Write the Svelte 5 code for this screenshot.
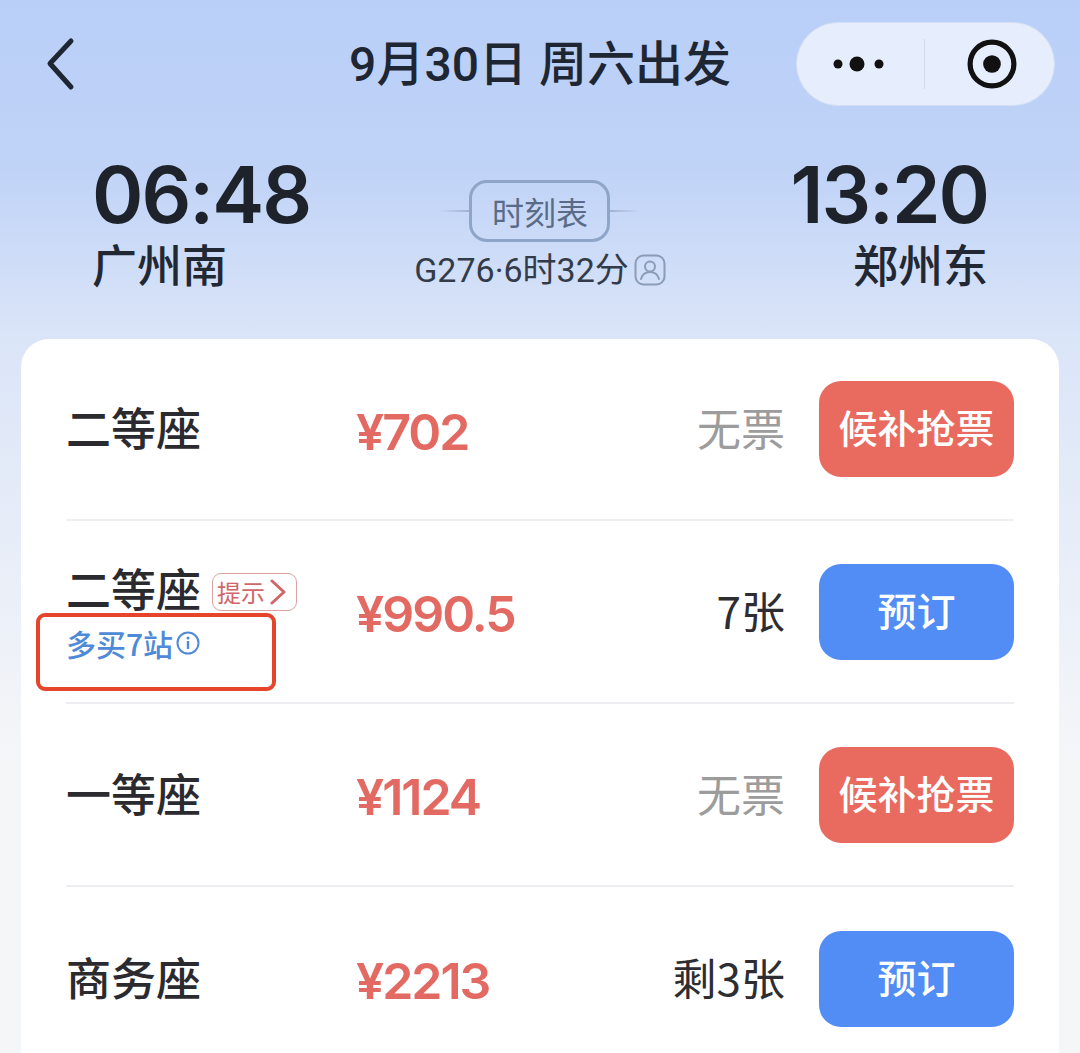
<script>
	const seats = [
		{ name: '二等座', price: '¥702', stock: '无票', soldOut: true },
		{ name: '二等座', price: '¥990.5', stock: '7张', soldOut: false, tip: true },
		{ name: '一等座', price: '¥1124', stock: '无票', soldOut: true },
		{ name: '商务座', price: '¥2213', stock: '剩3张', soldOut: false }
	];
</script>

<div class="page">
	<header class="nav">
		<svg class="back" width="32" height="56" viewBox="0 0 32 56">
			<path d="M26 4 L5 26.500 L26 50" fill="none" stroke="#1f2633" stroke-width="5" stroke-linecap="round" stroke-linejoin="round" />
		</svg>
		<div class="title">9月30日 周六出发</div>
		<div class="capsule">
			<svg width="52" height="16" viewBox="0 0 52 16">
				<circle cx="5" cy="8" r="4.500" fill="#111" />
				<circle cx="24" cy="8" r="7.500" fill="#111" />
				<circle cx="46" cy="8" r="4.500" fill="#111" />
			</svg>
			<span class="sep"></span>
			<svg width="50" height="50" viewBox="0 0 48 48">
				<circle cx="24" cy="24" r="21" fill="none" stroke="#111" stroke-width="5" />
				<circle cx="24" cy="24" r="8.500" fill="#111" />
			</svg>
		</div>
	</header>

	<section class="trip">
		<div class="end">
			<div class="time">06:48</div>
			<div class="station">广州南</div>
		</div>
		<div class="mid">
			<div class="sched"><span class="line left"></span><span class="pill">时刻表</span><span class="line right"></span></div>
			<div class="info">
				<span>G276·6时32分</span>
				<svg width="32" height="32" viewBox="0 0 32 32">
					<rect x="1.500" y="1.500" width="29" height="29" rx="8" fill="none" stroke="#8a9cb8" stroke-width="2" />
					<circle cx="16" cy="12.500" r="5" fill="none" stroke="#8a9cb8" stroke-width="2" />
					<path d="M7 25 C8.500 19.500 12 18 16 18 C20 18 23.500 19.500 25 25" fill="none" stroke="#8a9cb8" stroke-width="2" stroke-linecap="round" />
				</svg>
			</div>
		</div>
		<div class="end right">
			<div class="time">13:20</div>
			<div class="station">郑州东</div>
		</div>
	</section>

	<main class="card">
		{#each seats as seat}
			<div class="row">
				<div class="seat">
					<div class="seat-name">
						<span>{seat.name}</span>
						{#if seat.tip}
							<span class="tag">提示
								<svg width="16" height="26" viewBox="0 0 16 26">
									<path d="M2 2 L14 13 L2 24" fill="none" stroke="#d0666a" stroke-width="3" stroke-linecap="round" stroke-linejoin="round" />
								</svg>
							</span>
						{/if}
					</div>
					{#if seat.tip}
						<div class="extra">
							<span>多买7站</span>
							<svg width="24" height="24" viewBox="0 0 24 24">
								<circle cx="12" cy="12" r="10.500" fill="none" stroke="#4f8ad8" stroke-width="2" />
								<rect x="10.800" y="10" width="2.400" height="8" fill="#4f8ad8" />
								<circle cx="12" cy="7" r="1.500" fill="#4f8ad8" />
							</svg>
						</div>
						<div class="mark"></div>
					{/if}
				</div>
				<div class="price">{seat.price}</div>
				<div class="stock" class:none={seat.soldOut}>{seat.stock}</div>
				<button class="btn" class:wait={seat.soldOut}>{seat.soldOut ? '候补抢票' : '预订'}</button>
			</div>
		{/each}
	</main>
</div>

<style>
	:global(body) {
		margin: 0;
		background: #f5f6f8;
	}
	.page {
		height: 1053px;
		overflow: hidden;
		font-family: "Noto Sans CJK SC", "Noto Sans", sans-serif;
		color: #222833;
		background: linear-gradient(180deg, #b9cff8 0, #c0d3f7 170px, #dbe5f8 340px, #f5f6f8 760px);
	}
	.nav {
		display: grid;
		grid-template-columns: 1fr auto 1fr;
		align-items: center;
		height: 84px;
		padding: 21px 25px 0 45px;
	}
	.back {
		margin-top: 2px;
	}
	.title {
		font-family: Roboto, "Noto Sans CJK SC", sans-serif;
		font-size: 48px;
		font-weight: 500;
		line-height: 84px;
		margin-top: 2px;
		margin-left: -20px;
		color: #1f2633;
		white-space: nowrap;
	}
	.capsule {
		justify-self: end;
		display: flex;
		align-items: center;
		box-sizing: border-box;
		width: 259px;
		height: 84px;
		padding: 0 36px;
		border-radius: 42px;
		background: #e6edfc;
		border: 1px solid #d4dff5;
	}
	.sep {
		width: 1px;
		height: 50px;
		margin: 0 42px 0 39px;
		background: #d3dcef;
	}
	.trip {
		display: grid;
		grid-template-columns: 1fr auto 1fr;
		padding: 48px 92px 0;
	}
	.end {
		display: flex;
		flex-direction: column;
	}
	.end.right {
		align-items: flex-end;
	}
	.time {
		font-family: Inter, sans-serif;
		font-size: 78px;
		font-weight: 600;
		line-height: 84px;
		color: #1e222b;
		letter-spacing: -2px;
	}
	.station {
		font-size: 45px;
		font-weight: 500;
		line-height: 50px;
		margin-top: 2px;
	}
	.mid {
		display: flex;
		flex-direction: column;
		align-items: center;
		margin-top: 27px;
	}
	.sched {
		display: flex;
		align-items: center;
	}
	.pill {
		box-sizing: border-box;
		width: 141px;
		height: 62px;
		line-height: 56px;
		text-align: center;
		font-size: 32px;
		color: #5a6b88;
		border: 3px solid #8fa5c8;
		border-radius: 18px;
	}
	.line {
		width: 30px;
		height: 2px;
	}
	.line.left {
		background: linear-gradient(90deg, transparent, #9fb2d2);
	}
	.line.right {
		background: linear-gradient(90deg, #9fb2d2, transparent);
	}
	.info {
		display: flex;
		align-items: center;
		gap: 5px;
		margin-top: 6px;
		font-family: Roboto, "Noto Sans CJK SC", sans-serif;
		font-size: 34px;
		line-height: 44px;
		color: #333b4a;
		white-space: nowrap;
	}
	.card {
		box-sizing: border-box;
		margin: 0 21px;
		margin-top: 47px;
		padding: 0 45px;
		height: 760px;
		background: #fff;
		border-radius: 28px 28px 0 0;
	}
	.row {
		display: flex;
		align-items: center;
		box-sizing: border-box;
		height: 183px;
		border-bottom: 2px solid #eceef1;
	}
	.row:first-child {
		height: 182px;
	}
	.row:last-child {
		border-bottom: none;
	}
	.seat {
		position: relative;
		box-sizing: border-box;
		width: 290px;
		flex: none;
		align-self: stretch;
		padding-bottom: 4px;
		display: flex;
		flex-direction: column;
		justify-content: center;
	}
	.seat-name {
		display: flex;
		align-items: center;
		gap: 11px;
		font-size: 45px;
		font-weight: 500;
		line-height: 58px;
		color: #2b2b2f;
	}
	.tag {
		display: flex;
		align-items: center;
		gap: 5px;
		box-sizing: border-box;
		width: 85px;
		height: 38px;
		margin-top: 8px;
		padding-left: 4px;
		font-size: 24px;
		font-weight: 400;
		line-height: 34px;
		color: #d0666a;
		border: 1.500px solid #dba1a3;
		border-radius: 9px;
	}
	.extra {
		display: flex;
		align-items: center;
		gap: 3px;
		margin-top: 8px;
		font-size: 30px;
		font-weight: 500;
		line-height: 36px;
		color: #4f8ad8;
	}
	.mark {
		position: absolute;
		left: -30px;
		top: 92px;
		box-sizing: border-box;
		width: 240px;
		height: 78px;
		border: 4px solid #e6452c;
		border-radius: 9px;
	}
	.price {
		flex: 1;
		padding-top: 5px;
		font-family: Inter, sans-serif;
		font-size: 50px;
		font-weight: 600;
		letter-spacing: -2px;
		color: #e36a62;
	}
	.stock {
		padding-bottom: 4px;
		font-size: 44px;
		color: #2e2e32;
		margin-right: 34px;
	}
	.stock.none {
		color: #9c9c9c;
	}
	.btn {
		flex: none;
		width: 195px;
		height: 96px;
		padding: 0 0 6px;
		border: none;
		border-radius: 22px;
		font-family: inherit;
		font-size: 39px;
		font-weight: 500;
		color: #fff;
		background: #518df5;
	}
	.btn.wait {
		background: #e96b60;
	}
</style>
